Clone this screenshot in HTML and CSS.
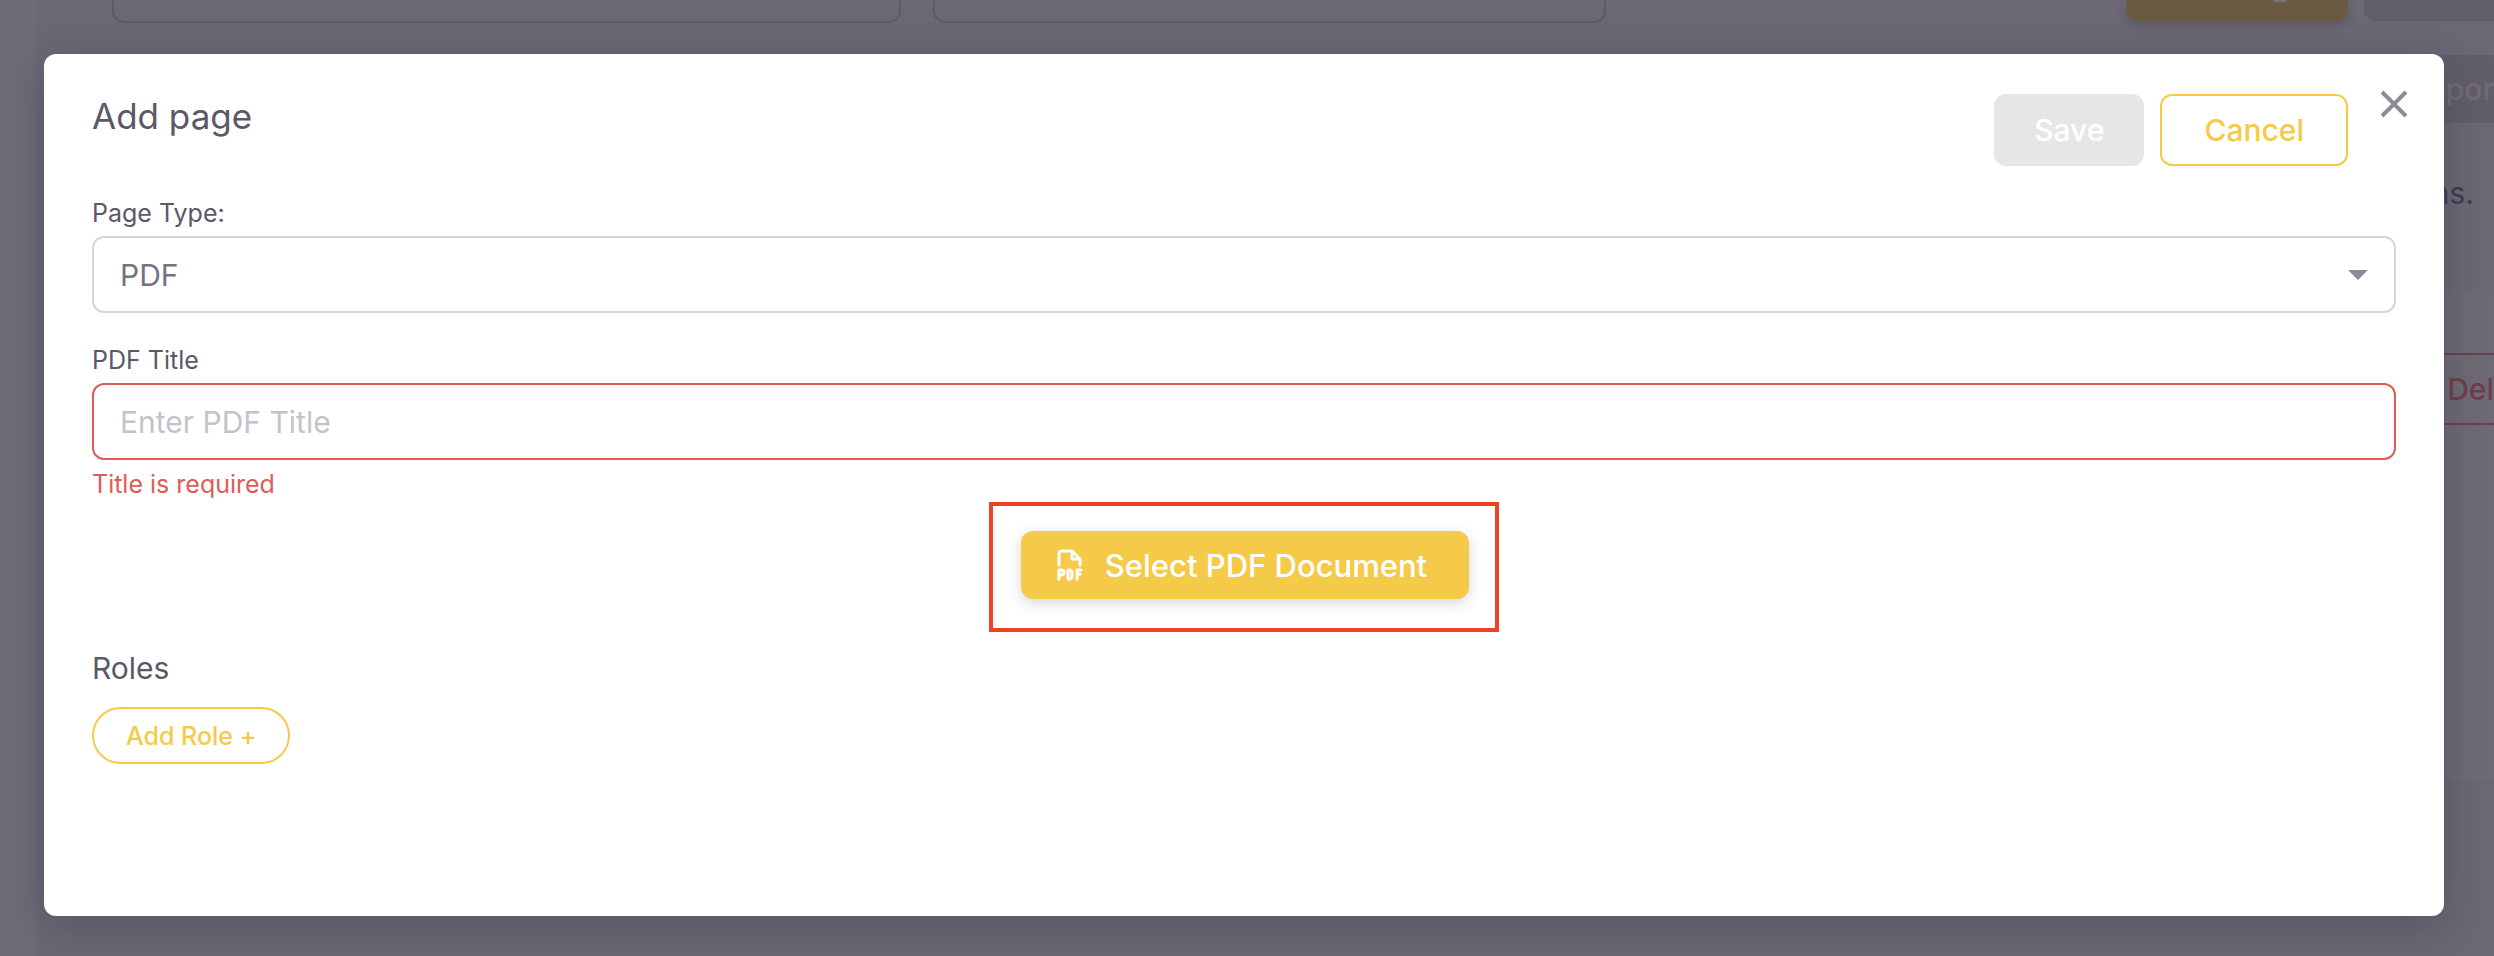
FILE: index.html
```
<!DOCTYPE html>
<html lang="en">
    <head>
        <meta charset="utf-8">
        <title>Add page</title>
        <link rel="stylesheet" href="styles.css">
    </head>
    <body>
        <div class="app">
            <div class="sidebar"></div>
            <div class="main">
                <div class="toolbar">
                    <div class="filter filter-wide"></div>
                    <div class="filter"></div>
                    <div class="toolbar-actions">
                        <div class="bg-btn bg-btn-yellow"><div class="tail"></div></div>
                        <div class="bg-btn bg-btn-grey"></div>
                    </div>
                </div>
                <div class="report-row">epor</div>
                <p class="note">ns.</p>
                <div class="card">
                    <div class="delete-row">Del</div>
                </div>
            </div>
        </div>

        <form class="modal" role="dialog" aria-labelledby="modalTitle">
            <div class="modal-header">
                <h1 id="modalTitle">Add page</h1>
                <div class="modal-actions">
                    <button type="button" class="btn btn-save" disabled>Save</button>
                    <button type="button" class="btn btn-cancel">Cancel</button>
                    <button type="button" class="close" aria-label="Close">
                        <svg width="28" height="28" viewBox="0 0 28 28"><path d="M2 2 L26 26 M26 2 L2 26" stroke="#8d8b96" stroke-width="4" fill="none"/></svg>
                    </button>
                </div>
            </div>

            <label for="pageType">Page Type:</label>
            <div class="select-box">
                <select id="pageType" class="field">
                    <option>PDF</option>
                </select>
                <svg class="arrow" width="20" height="10" viewBox="0 0 20 10"><path d="M0 0 H20 L10 10 Z" fill="#8d8b96"/></svg>
            </div>

            <label for="pdfTitle">PDF Title</label>
            <input type="text" id="pdfTitle" class="field field-error" placeholder="Enter PDF Title">
            <p class="error">Title is required</p>

            <div class="highlight">
                <button type="button" class="btn-select">
                    <svg width="26" height="32" viewBox="0 0 26 32" fill="none" stroke="#fff" stroke-width="3" stroke-linecap="round" stroke-linejoin="round">
                        <path d="M2 16 V5 Q2 2 5 2 H15 L23 10 V16"/>
                        <path d="M15 3 V10 H22"/>
                        <path d="M2 30 V21 H4 Q7 21 7 23 Q7 26 4 26 H2"/>
                        <path d="M11 21 H12 Q15 21 15 24 V27 Q15 30 12 30 H11 Z"/>
                        <path d="M20 30 V21 H24 M20 25 H23"/>
                    </svg>
                    Select PDF Document
                </button>
            </div>

            <h2>Roles</h2>
            <button type="button" class="btn-role">Add Role +</button>
        </form>
    </body>
</html>
```
FILE: styles.css
```
* {
    box-sizing: border-box;
}
body {
    margin: 0;
    min-height: 100vh;
    display: grid;
    overflow: hidden;
    background-color: #6c6875;
    font-family: Inter, "Liberation Sans", sans-serif;
    color: #5b5867;
}
button, input, select {
    font-family: inherit;
}

/* page behind the dialog */
.app {
    grid-area: 1 / 1;
    display: flex;
    min-width: 0;
}
.sidebar {
    width: 36px;
    background-color: #706c77;
}
.main {
    flex: 1;
    min-width: 0;
}
.toolbar {
    display: flex;
    gap: 32px;
    height: 23px;
    padding-left: 76px;
}
.filter {
    flex: 672;
    border: 2px solid #5f5c69;
    border-top: none;
    border-radius: 0 0 12px 12px;
}
.filter-wide {
    flex: 788;
}
.toolbar-actions {
    flex: 860;
    display: flex;
    justify-content: flex-end;
    gap: 16px;
}
.bg-btn {
    width: 130px;
    height: 21px;
    border-radius: 0 0 12px 12px;
}
.bg-btn-yellow {
    width: 222px;
    padding-left: 147px;
    background-color: #6b5b40;
    box-shadow: 0 4px 10px rgba(58, 53, 65, .3);
}
.tail {
    width: 14px;
    height: 2px;
    border-radius: 0 0 7px 7px;
    background-color: #77737f;
}
.bg-btn-grey {
    background-color: #635e6b;
    border-bottom-right-radius: 0;
}
.report-row {
    height: 68px;
    margin: 32px 0 0 76px;
    background-color: #635e6b;
    text-align: right;
    font-size: 30px;
    font-weight: 500;
    line-height: 68px;
    color: #716d79;
}
.note {
    margin: 52px 20px 0 0;
    text-align: right;
    font-size: 30px;
    line-height: 36px;
    color: #3f3b4a;
}
.card {
    height: 490px;
    margin: 79px 0 0 76px;
    padding-top: 63px;
    background-color: #6f6b76;
}
.delete-row {
    height: 72px;
    border: 2px solid #6f3f4b;
    border-width: 2px 0;
    text-align: right;
    font-size: 30px;
    font-weight: 500;
    line-height: 68px;
    color: #6f3f4b;
}

/* dialog */
.modal {
    grid-area: 1 / 1;
    margin: 54px 50px 40px 44px;
    padding: 40px 48px;
    border-radius: 12px;
    background-color: #fff;
    box-shadow: 0 10px 44px 4px rgba(58, 53, 65, .35);
}
.modal-header {
    display: flex;
    justify-content: space-between;
    align-items: flex-start;
    height: 101px;
}
h1 {
    margin: 0;
    font-size: 35px;
    font-weight: 400;
    line-height: 44px;
}
.modal-actions {
    display: flex;
    align-items: flex-start;
    gap: 16px;
}
.btn {
    height: 72px;
    border: 2px solid #f5ca49;
    border-radius: 12px;
    font-size: 30px;
    font-weight: 500;
}
.btn-save {
    padding: 0 38px;
    border-color: #e6e6e8;
    background-color: #e6e6e8;
    color: #fff;
}
.btn-cancel {
    padding: 0 42px;
    background-color: #fff;
    color: #f5ca49;
}
.close {
    margin: -4px -12px 0 16px;
    padding: 0;
    border: none;
    background: none;
}
label {
    display: block;
    font-size: 25px;
    line-height: 36px;
    margin-bottom: 5px;
}
.select-box {
    display: grid;
    align-items: center;
    margin-bottom: 29px;
}
.select-box > * {
    grid-area: 1 / 1;
}
.arrow {
    justify-self: end;
    margin-right: 28px;
    pointer-events: none;
}
.field {
    display: block;
    width: 100%;
    height: 77px;
    padding: 0 26px;
    border: 2px solid #d5d5d7;
    border-radius: 12px;
    background-color: #fff;
    font-size: 30px;
    color: #75727f;
    appearance: none;
}
.field-error {
    border-color: #dc5d58;
}
.field::placeholder {
    color: #c4c3c9;
}
.error {
    margin: 6px 0 0;
    font-size: 25px;
    line-height: 36px;
    color: #dc5d58;
}
.highlight {
    width: fit-content;
    margin: 0 auto;
    padding: 25px 26px 29px 28px;
    border: 4px solid #ee4127;
}
.btn-select {
    display: flex;
    align-items: center;
    gap: 22px;
    height: 68px;
    padding: 0 42px 0 36px;
    border: none;
    border-radius: 12px;
    background-color: #f5ca49;
    box-shadow: 0 4px 14px rgba(58, 53, 65, .2);
    font-size: 31px;
    font-weight: 500;
    color: #fff;
}
h2 {
    margin: 18px 0 21px;
    font-size: 30px;
    font-weight: 400;
    line-height: 36px;
}
.btn-role {
    height: 57px;
    padding: 0 32px;
    border: 2px solid #f5ca49;
    border-radius: 29px;
    background-color: #fff;
    font-size: 25px;
    font-weight: 500;
    color: #f5ca49;
}
```
